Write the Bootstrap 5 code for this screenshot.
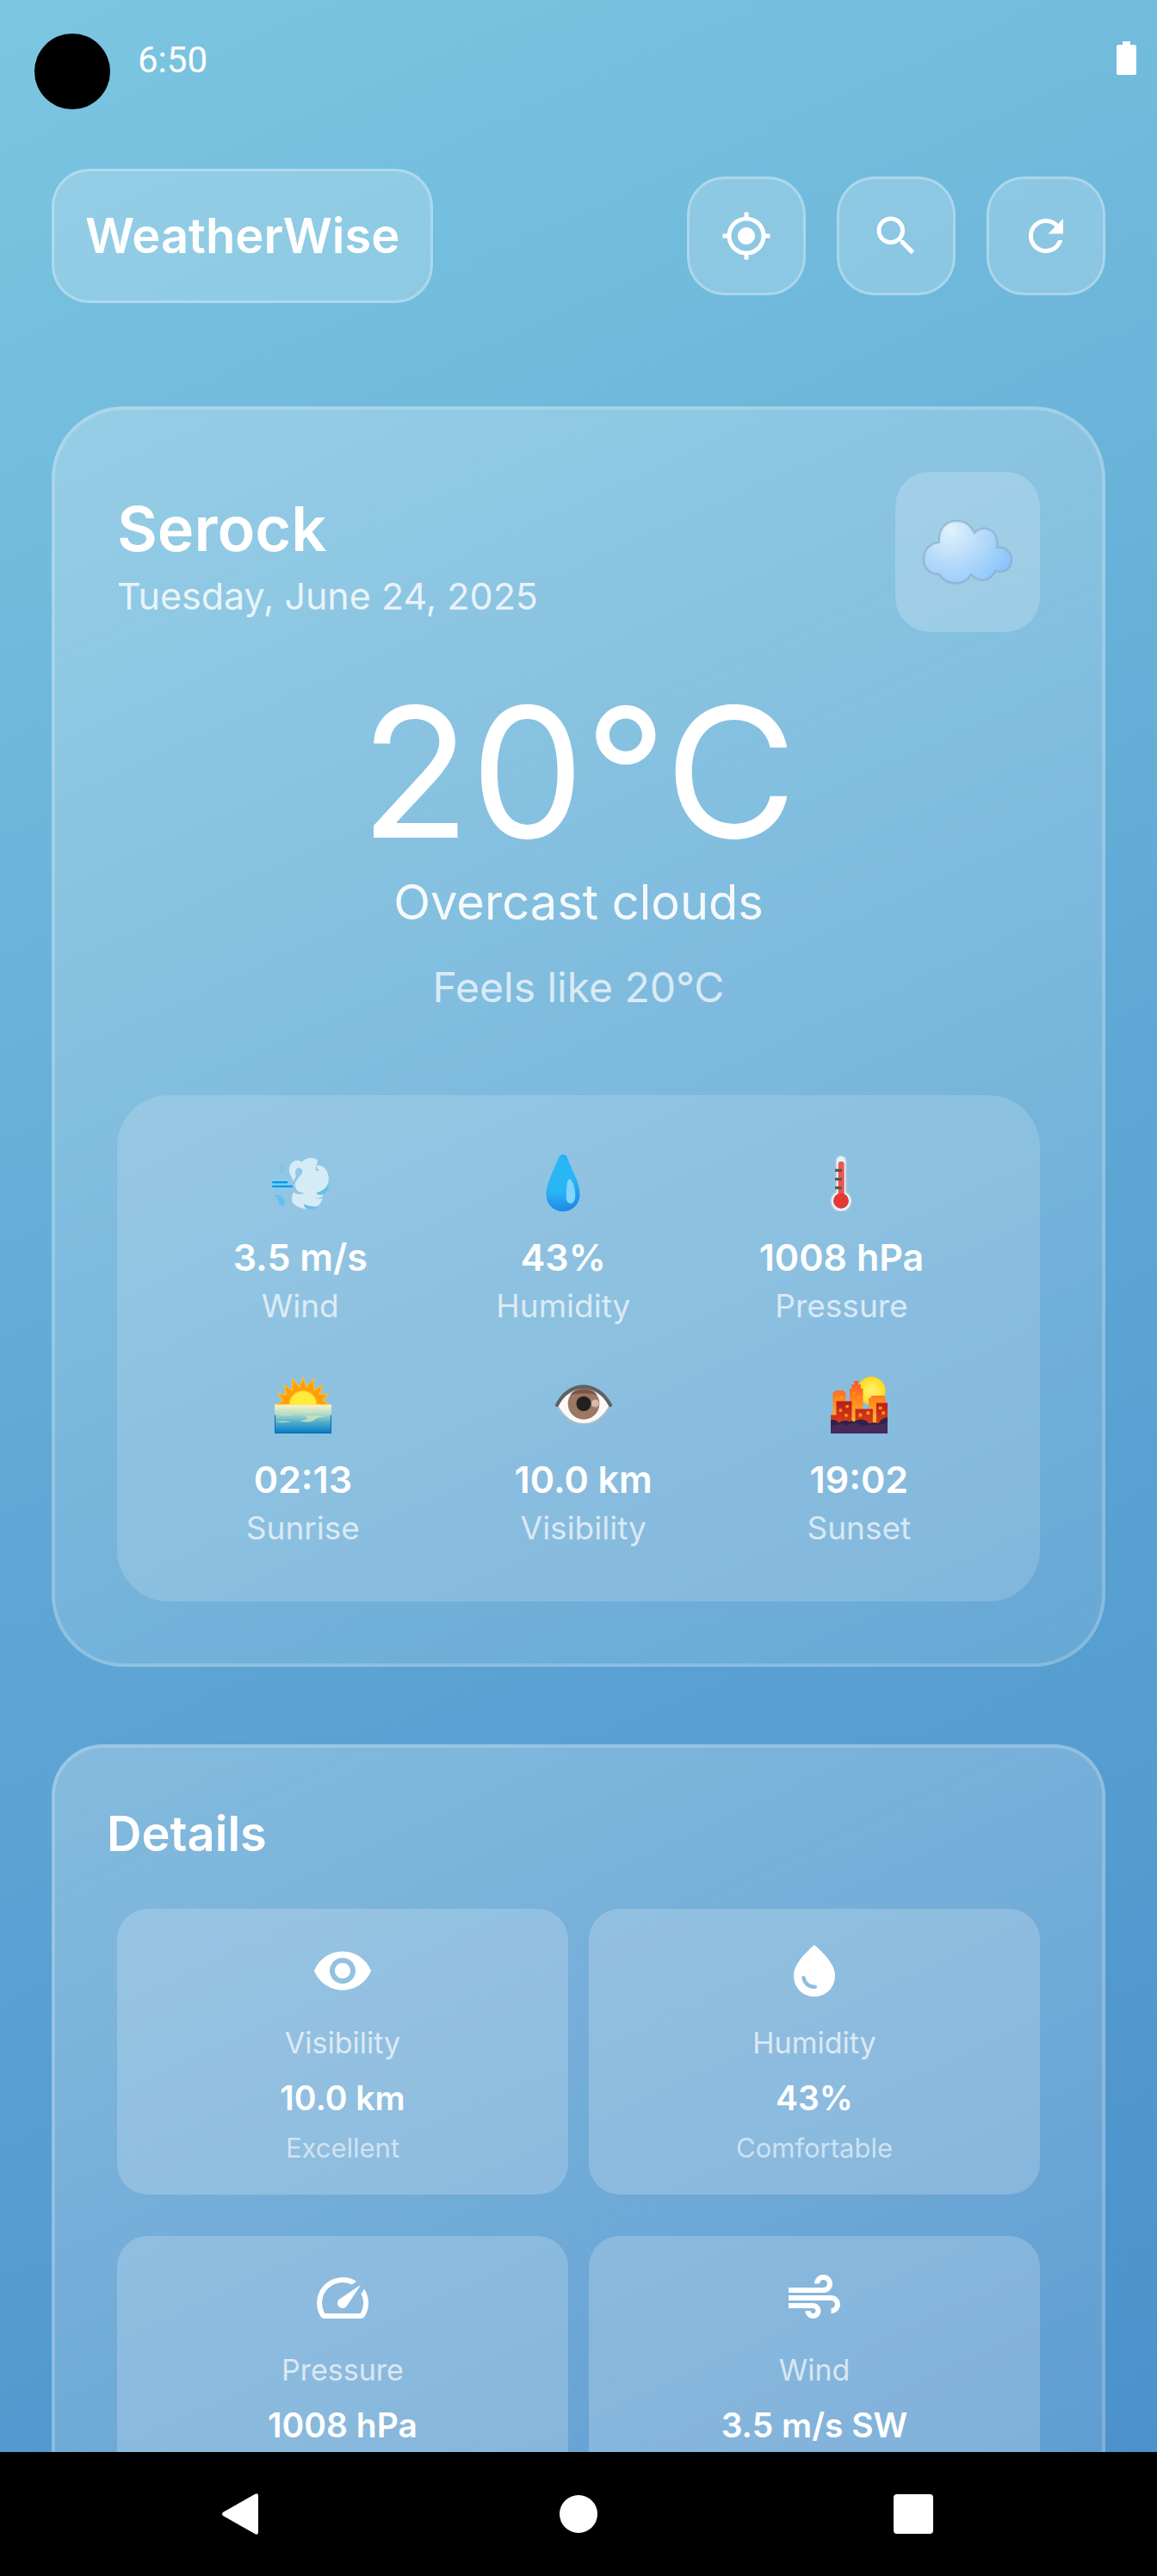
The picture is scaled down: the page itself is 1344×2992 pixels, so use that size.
<!DOCTYPE html>
<html lang="en">
<head>
<meta charset="utf-8">
<meta name="viewport" content="width=device-width, initial-scale=1">
<title>WeatherWise</title>
<link href="https://cdn.jsdelivr.net/npm/bootstrap@5.3.0/dist/css/bootstrap.min.css" rel="stylesheet">
<style>
  body { font-family: Inter, "Open Sans", sans-serif; color: #fff; background: linear-gradient(155.8deg, #7cc6e1 0%, #5fa8d5 50%, #4a8fcb 100%); }
  .screen { min-height: 0; }
  .px-screen { padding-left: 60px; padding-right: 60px; }

  .status { padding: 39px 24px 0 40px; gap: 32px; font: 400 42px/62px Roboto, sans-serif; }
  .status-row { height: 62px; }
  .camera { width: 88px; height: 88px; }
  .app-header { margin-top: 69px; }

  .glass { background: rgba(255,255,255,.2); border: 3px solid rgba(255,255,255,.27); border-radius: 44px; }
  .brand { height: 156px; padding: 0 36px; font-size: 56px; font-weight: 600; line-height: 80px; }
  .tools { gap: 36px; }
  .tool { width: 138px; height: 138px; color: #fff; padding: 0; }
  .tool svg { width: 60px; height: 60px; }

  .panel { border: 4px solid rgba(255,255,255,.2); background: linear-gradient(155deg, rgba(255,255,255,.25), rgba(255,255,255,.1)) border-box; }
  .now { margin-top: 120px; padding: 72px; border-radius: 84px; }
  .city { font-size: 72px; font-weight: 600; line-height: 102px; }
  .date { font-size: 43px; line-height: 55px; opacity: .8; }
  .sky { width: 168px; height: 186px; border-radius: 40px; background: rgba(255,255,255,.2); }
  .temp { margin-top: 52px; font-size: 210px; font-weight: 400; line-height: 222px; }
  .desc { font-size: 56px; line-height: 80px; opacity: .92; }
  .feels { margin-top: 24px; font-size: 48px; line-height: 70px; opacity: .7; }

  .stats { margin-top: 90px; padding: 60px; border-radius: 60px; background: rgba(255,255,255,.16); }
  .stats-gap { gap: 48px; }
  .emoji { width: 66px; height: 66px; margin: 9px 0 21px; }
  .stat-value { font-size: 43px; font-weight: 600; line-height: 64px; }
  .stat-label { font-size: 37px; line-height: 50px; opacity: .68; }

  .details { margin-top: 90px; padding: 60px; border-radius: 60px; }
  .details h2 { font-size: 56px; font-weight: 600; line-height: 80px; margin: 0 0 47px; }
  .tiles { margin: 0 12px; display: grid; grid-template-columns: 1fr 1fr; gap: 48px 24px; }
  .tile { padding: 36px; border-radius: 36px; background: rgba(255,255,255,.2); }
  .tile svg { width: 72px; height: 72px; margin-bottom: 24px; }
  .tile-label { font-size: 34px; line-height: 48px; opacity: .68; }
  .tile-value { font-size: 39px; font-weight: 600; line-height: 80px; }
  .tile-note { font-size: 31px; line-height: 36px; opacity: .58; }

  .sysnav { height: 144px; padding: 0 87px; background: #000; }
  .sysnav button { color: #fff; padding: 0; border-radius: 0; }
</style>
<script src="https://cdn.jsdelivr.net/npm/bootstrap@5.3.0/dist/js/bootstrap.bundle.min.js"></script>
</head>
<body class="vh-100 d-flex flex-column">
<div class="screen flex-grow-1 overflow-hidden">

  <div class="status d-flex align-items-start">
    <div class="camera rounded-circle bg-black flex-shrink-0"></div>
    <div class="status-row d-flex flex-grow-1 align-items-center justify-content-between">
      <time>6:50</time>
      <svg width="23" height="44" viewBox="0 0 23 44" fill="#fff" aria-hidden="true"><path d="M7 0h9v4h5a2 2 0 0 1 2 2v31a2 2 0 0 1-2 2H2a2 2 0 0 1-2-2V6a2 2 0 0 1 2-2h5z"/></svg>
    </div>
  </div>

  <header class="app-header px-screen d-flex align-items-center justify-content-between">
    <h1 class="brand glass d-flex align-items-center mb-0">WeatherWise</h1>
    <div class="tools d-flex">
      <button type="button" class="tool glass btn d-flex align-items-center justify-content-center" aria-label="Use my location">
        <svg viewBox="0 0 24 24" fill="currentColor"><path d="M12 8c-2.21 0-4 1.790-4 4s1.790 4 4 4 4-1.790 4-4-1.790-4-4-4zm8.940 3A8.994 8.994 0 0 0 13 3.060V1h-2v2.060A8.994 8.994 0 0 0 3.060 11H1v2h2.060A8.994 8.994 0 0 0 11 20.940V23h2v-2.060A8.994 8.994 0 0 0 20.940 13H23v-2h-2.060zM12 19c-3.870 0-7-3.130-7-7s3.130-7 7-7 7 3.130 7 7-3.130 7-7 7z"/></svg>
      </button>
      <button type="button" class="tool glass btn d-flex align-items-center justify-content-center" aria-label="Search">
        <svg viewBox="0 0 24 24" fill="currentColor"><path d="M15.500 14h-.790l-.280-.270A6.471 6.471 0 0 0 16 9.500 6.500 6.500 0 1 0 9.500 16c1.610 0 3.090-.590 4.230-1.570l.270.280v.790l5 4.990L20.490 19l-4.990-5zm-6 0C7.010 14 5 11.990 5 9.500S7.010 5 9.500 5 14 7.010 14 9.500 11.990 14 9.500 14z"/></svg>
      </button>
      <button type="button" class="tool glass btn d-flex align-items-center justify-content-center" aria-label="Refresh">
        <svg viewBox="0 0 24 24" fill="currentColor"><path d="M17.650 6.350A7.958 7.958 0 0 0 12 4c-4.420 0-7.990 3.580-7.990 8s3.570 8 7.990 8c3.730 0 6.840-2.550 7.730-6h-2.080A5.990 5.990 0 0 1 12 18c-3.310 0-6-2.690-6-6s2.690-6 6-6c1.660 0 3.140.690 4.220 1.780L13 11h7V4l-2.350 2.350z"/></svg>
      </button>
    </div>
  </header>

  <main class="px-screen">
    <section class="now panel">
      <div class="d-flex align-items-center justify-content-between">
        <div>
          <div class="city">Serock</div>
          <div class="date">Tuesday, June 24, 2025</div>
        </div>
        <div class="sky d-flex align-items-center justify-content-center">
          <svg width="108" height="78" viewBox="-2 -2 108 78" role="img" aria-label="Cloud">
            <defs><radialGradient id="cl" gradientUnits="userSpaceOnUse" cx="32" cy="12" r="78"><stop offset="0" stop-color="#e0f1fd"/><stop offset=".45" stop-color="#b9dcfa"/><stop offset="1" stop-color="#8ac5fa"/></radialGradient></defs>
            <path fill="url(#cl)" stroke="#8ba6c4" stroke-opacity=".6" stroke-width="2.500" d="M19 26C18 10 27 1 39 1c12 0 18 8 21 14 10-11 29-4 26 17 10-2 17 6 17 14 0 12-10 16-19 13-5 13-20 14-28 4-8 15-29 13-37 0C6 63 1 54 1 45c0-11 8-18 18-19z"/>
          </svg>
        </div>
      </div>
      <div class="text-center">
        <div class="temp">20°C</div>
        <div class="desc">Overcast clouds</div>
        <div class="feels">Feels like 20°C</div>
      </div>

      <div class="stats stats-gap d-flex flex-column">
        <div class="d-flex justify-content-around text-center">
          <div>
            <svg class="emoji" viewBox="0 0 162 162" aria-hidden="true">
              <path fill="#d5ebf6" d="M55 62C44 52 48 22 66 18c8-3 14-1 18 4 10-14 38-16 46-6l-3 16c22-6 37 20 34 42-2 14-6 22-17 26 6 14-1 42-20 50-20 9-48 5-64-11-8-11 0-36 8-42z"/>
              <path fill="#93c7e4" d="M68 63c-3-14-1-26 9-25 8 0 12 8 8 16-11 16-28 30-15 46 6 8 15 8 22 10-14 7-28 2-35-6l-1-20zM127 28c0 8 1 14 8 15-3 6-12 3-11-4zM117 118c12 9 24 6 29-2 2 9-9 12-15 9-5-1-10-3-14-7z"/>
              <path fill="#62bfee" d="M128 108c16-4 28-12 32-26 5 19-10 34-26 33-5-1-8-4-6-7zM92 142c12 6 28 7 41 6-9 9-33 10-40 1-2-3-2-5-1-7z"/>
              <path fill="#7fc4ea" d="M24 25c12 2 17 18 5 28-5 4-10 4-12 1 7-8 13-15 7-29z"/>
              <path fill="#62bfee" d="M7 115c18-1 32 10 29 27-6 8-16 3-17-7-2-9-6-14-12-20z"/>
              <path fill="#8cccf0" d="M0 70h56v30H0z"/><path stroke="#0b9ae2" stroke-width="6" stroke-linecap="round" d="M3 79h39M3 91h53"/>
            </svg>
            <div class="stat-value">3.5 m/s</div><div class="stat-label">Wind</div>
          </div>
          <div>
            <svg class="emoji" viewBox="0 0 162 162" aria-hidden="true">
              <defs><radialGradient id="dr" gradientUnits="userSpaceOnUse" cx="66" cy="60" r="104"><stop offset=".45" stop-color="#29b6f6"/><stop offset="1" stop-color="#1e88e5"/></radialGradient></defs>
              <path fill="url(#dr)" d="M70 6c4-8 18-8 22 0 9 26 37 74 37 106 0 29-20 50-48 50s-48-21-48-50C33 80 61 32 70 6z"/>
              <path fill="#81d4fa" d="M97 71c8-6 19 24 19 44 0 17-5 24-13 24s-13-6-13-19c0-14 1-44 7-49z"/>
            </svg>
            <div class="stat-value">43%</div><div class="stat-label">Humidity</div>
          </div>
          <div>
            <svg class="emoji" viewBox="0 0 162 162" aria-hidden="true">
              <path fill="#e1f5fe" stroke="#b0c9d2" stroke-width="4" d="M66 18a15 15 0 0 1 30 0v89a30 30 0 1 1-30 0z"/>
              <path fill="#ef5350" d="M73 28a8 8 0 0 1 17 0v90H73z"/><circle cx="81" cy="132" r="22" fill="#e53935"/>
              <path stroke="#575757" stroke-width="8" d="M64 45h19M64 70h19M64 95h19"/>
            </svg>
            <div class="stat-value">1008 hPa</div><div class="stat-label">Pressure</div>
          </div>
        </div>
        <div class="d-flex justify-content-around text-center">
          <div>
            <svg class="emoji" viewBox="0 0 162 162" aria-hidden="true">
              <defs>
                <linearGradient id="sea" x1="0" y1="0" x2="0" y2="1"><stop offset="0" stop-color="#fdf3c4"/><stop offset=".3" stop-color="#b5dccb"/><stop offset=".65" stop-color="#46a7cb"/><stop offset="1" stop-color="#0478c4"/></linearGradient>
              </defs>
              <path fill="#ff9f05" stroke="#fcbf2a" stroke-width="3" stroke-linejoin="round" d="M4 79l20-11-14-20 24 3-8-27 24 14 1-32 20 24L81 3l10 27 20-24 1 32 24-14-8 27 24-3-14 20 20 11z"/>
              <path fill="#ffeb3b" stroke="#ffc928" stroke-width="3" d="M42 80a39 39 0 0 1 78 0z"/>
              <path fill="url(#sea)" d="M0 80h162v82H0z"/>
              <path fill="#d9e5b4" opacity=".75" d="M38 94c24-3 42-4 58-1 14 0 34 0 50 3-20 2-34 2-44 7-20-4-44-2-64-9zM10 108c14-2 28-2 42 1-14 2-28 2-42-1zM82 112c24-2 44-2 64 0-14 4-30 4-32 12-16 8-30 6-42 2 14-4 34-6 10-14zM4 129c14-3 28-3 42-1-14 3-28 4-42 1z"/>
              <path fill="none" stroke="#0670b6" stroke-width="3" d="M1 110v50h160v-50"/>
            </svg>
            <div class="stat-value">02:13</div><div class="stat-label">Sunrise</div>
          </div>
          <div>
            <svg class="emoji" viewBox="0 0 162 162" aria-hidden="true">
              <path fill="#fafafa" stroke="#b0bec5" stroke-width="5" d="M5 81C40 20 122 20 157 81c-36 72-116 72-152 0z"/>
              <circle cx="81" cy="77" r="45" fill="#9b7764"/><path fill="#795548" d="M43 53c12-22 64-22 76 0-18-8-56-8-76 0z"/>
              <circle cx="81" cy="77" r="21" fill="#212121"/><circle cx="114" cy="76" r="11" fill="#d9baa5"/>
              <path fill="none" stroke="#616161" stroke-width="10" stroke-linecap="round" d="M5 81c34-70 116-70 152 0"/>
            </svg>
            <div class="stat-value">10.0 km</div><div class="stat-label">Visibility</div>
          </div>
          <div>
            <svg class="emoji" viewBox="0 0 162 162" aria-hidden="true">
              <defs>
                <linearGradient id="bf" gradientUnits="userSpaceOnUse" x1="0" y1="12" x2="0" y2="140"><stop offset="0" stop-color="#ff5722"/><stop offset="1" stop-color="#fdc32a"/></linearGradient>
                <linearGradient id="bn" x1="0" y1="0" x2="0" y2="1"><stop offset="0" stop-color="#b71c1c"/><stop offset="1" stop-color="#e64a19"/></linearGradient>
                <radialGradient id="sn"><stop offset="0" stop-color="#fff176"/><stop offset=".5" stop-color="#ffe94d"/><stop offset="1" stop-color="#ffd814"/></radialGradient>
              </defs>
              <circle cx="116" cy="40" r="40" fill="url(#sn)"/>
              <path fill="url(#bf)" d="M6 140V44h6v-5h26v5h5v96zM54 140V34h6V22h7V12h12v10h7v12h6v106zM108 140V60h7v-6h38v6h4v80z"/>
              <path fill="#ff9800" d="M14 60h8v8h-8zM27 55h8v8h-8zM63 44h8v8h-8zM76 54h8v8h-8zM63 72h8v8h-8zM118 74h8v8h-8zM136 64h8v8h-8z"/>
              <path fill="url(#bn)" d="M16 70h44v80H16zM70 92h50v60H70zM130 75h32v80h-32zM0 109h20v40H0z"/>
              <path fill="#fb9f0c" d="M43 81h8v8h-8zM24 92h8v8h-8zM40 106h8v8h-8zM80 105h9v9h-9zM102 99h9v9h-9zM137 85h9v8h-9zM146 99h8v9h-8z"/>
              <path fill="#30224a" d="M0 124c10-4 18 0 22 8 8-6 22-10 31-3 4-4 10-4 13 0 10-10 36-10 44 5 10-6 20-3 27-1 4-10 14-16 25-17v46H0z"/>
              <path fill="#4b2d5e" d="M0 140c20 0 30-10 46 0 20-14 34-8 44 2 20-10 44 0 72-12v32H0z" opacity=".8"/>
            </svg>
            <div class="stat-value">19:02</div><div class="stat-label">Sunset</div>
          </div>
        </div>
      </div>
    </section>

    <section class="details panel">
      <h2>Details</h2>
      <div class="tiles text-center">
        <div class="tile">
          <svg viewBox="0 0 24 24" fill="#fff" aria-hidden="true"><path d="M12 4.500C7 4.500 2.730 7.610 1 12c1.730 4.390 6 7.500 11 7.500s9.270-3.110 11-7.500c-1.730-4.390-6-7.500-11-7.500zM12 17c-2.760 0-5-2.240-5-5s2.240-5 5-5 5 2.240 5 5-2.240 5-5 5zm0-8c-1.660 0-3 1.340-3 3s1.340 3 3 3 3-1.340 3-3-1.340-3-3-3z"/></svg>
          <div class="tile-label">Visibility</div><div class="tile-value">10.0 km</div><div class="tile-note">Excellent</div>
        </div>
        <div class="tile">
          <svg viewBox="0 0 24 24" fill="#fff" aria-hidden="true"><path d="M12 2c-5.330 4.550-8 8.480-8 11.800 0 4.980 3.800 8.200 8 8.200s8-3.220 8-8.200c0-3.320-2.670-7.250-8-11.800zM7.830 14c.370 0 .670.260.740.620.410 2.220 2.280 2.980 3.640 2.870.430-.020.790.320.790.750 0 .400-.320.730-.720.750-2.130.130-4.620-1.090-5.190-4.120A.750.750 0 0 1 7.830 14z"/></svg>
          <div class="tile-label">Humidity</div><div class="tile-value">43%</div><div class="tile-note">Comfortable</div>
        </div>
        <div class="tile">
          <svg viewBox="0 0 24 24" fill="#fff" aria-hidden="true"><path d="M20.380 8.570l-1.230 1.850a8 8 0 0 1-.220 7.580H5.070A8 8 0 0 1 15.580 6.850l1.850-1.230A10 10 0 0 0 3.350 19a2 2 0 0 0 1.720 1h13.850a2 2 0 0 0 1.740-1 10 10 0 0 0-.270-10.440zm-9.790 6.840a2 2 0 0 0 2.830 0l5.660-8.490-8.490 5.660a2 2 0 0 0 0 2.830z"/></svg>
          <div class="tile-label">Pressure</div><div class="tile-value">1008 hPa</div>
        </div>
        <div class="tile">
          <svg viewBox="0 0 24 24" fill="#fff" aria-hidden="true"><path d="M14.500 17c0 1.650-1.350 3-3 3s-3-1.350-3-3h2c0 .550.450 1 1 1s1-.450 1-1-.450-1-1-1H2v-2h9.500c1.650 0 3 1.350 3 3zM19 6.500C19 4.570 17.430 3 15.500 3S12 4.570 12 6.500h2c0-.830.670-1.500 1.500-1.500s1.500.670 1.500 1.500S16.330 8 15.500 8H2v2h13.500c1.930 0 3.500-1.570 3.500-3.500zm-.5 4.500H2v2h16.500c.830 0 1.500.670 1.500 1.500s-.670 1.500-1.500 1.500v2c1.930 0 3.500-1.570 3.500-3.500S20.430 11 18.500 11z"/></svg>
          <div class="tile-label">Wind</div><div class="tile-value">3.5 m/s SW</div>
        </div>
      </div>
    </section>
  </main>
</div>

<nav class="sysnav d-flex align-items-center flex-shrink-0" aria-label="System navigation">
  <div class="col text-center"><button type="button" class="btn border-0" aria-label="Back"><svg class="d-block" width="48" height="48" viewBox="0 0 48 48" fill="currentColor"><path d="M1 22L38 1q4-2 4 2v42q0 4-4 2L1 26q-2-2 0-4z"/></svg></button></div>
  <div class="col text-center"><button type="button" class="btn border-0" aria-label="Home"><svg class="d-block" width="48" height="48" viewBox="0 0 48 48" fill="currentColor"><circle cx="24" cy="24" r="22"/></svg></button></div>
  <div class="col text-center"><button type="button" class="btn border-0" aria-label="Recent apps"><svg class="d-block" width="48" height="48" viewBox="0 0 48 48" fill="currentColor"><rect y="1" width="46" height="46" rx="4"/></svg></button></div>
</nav>
</body>
</html>
